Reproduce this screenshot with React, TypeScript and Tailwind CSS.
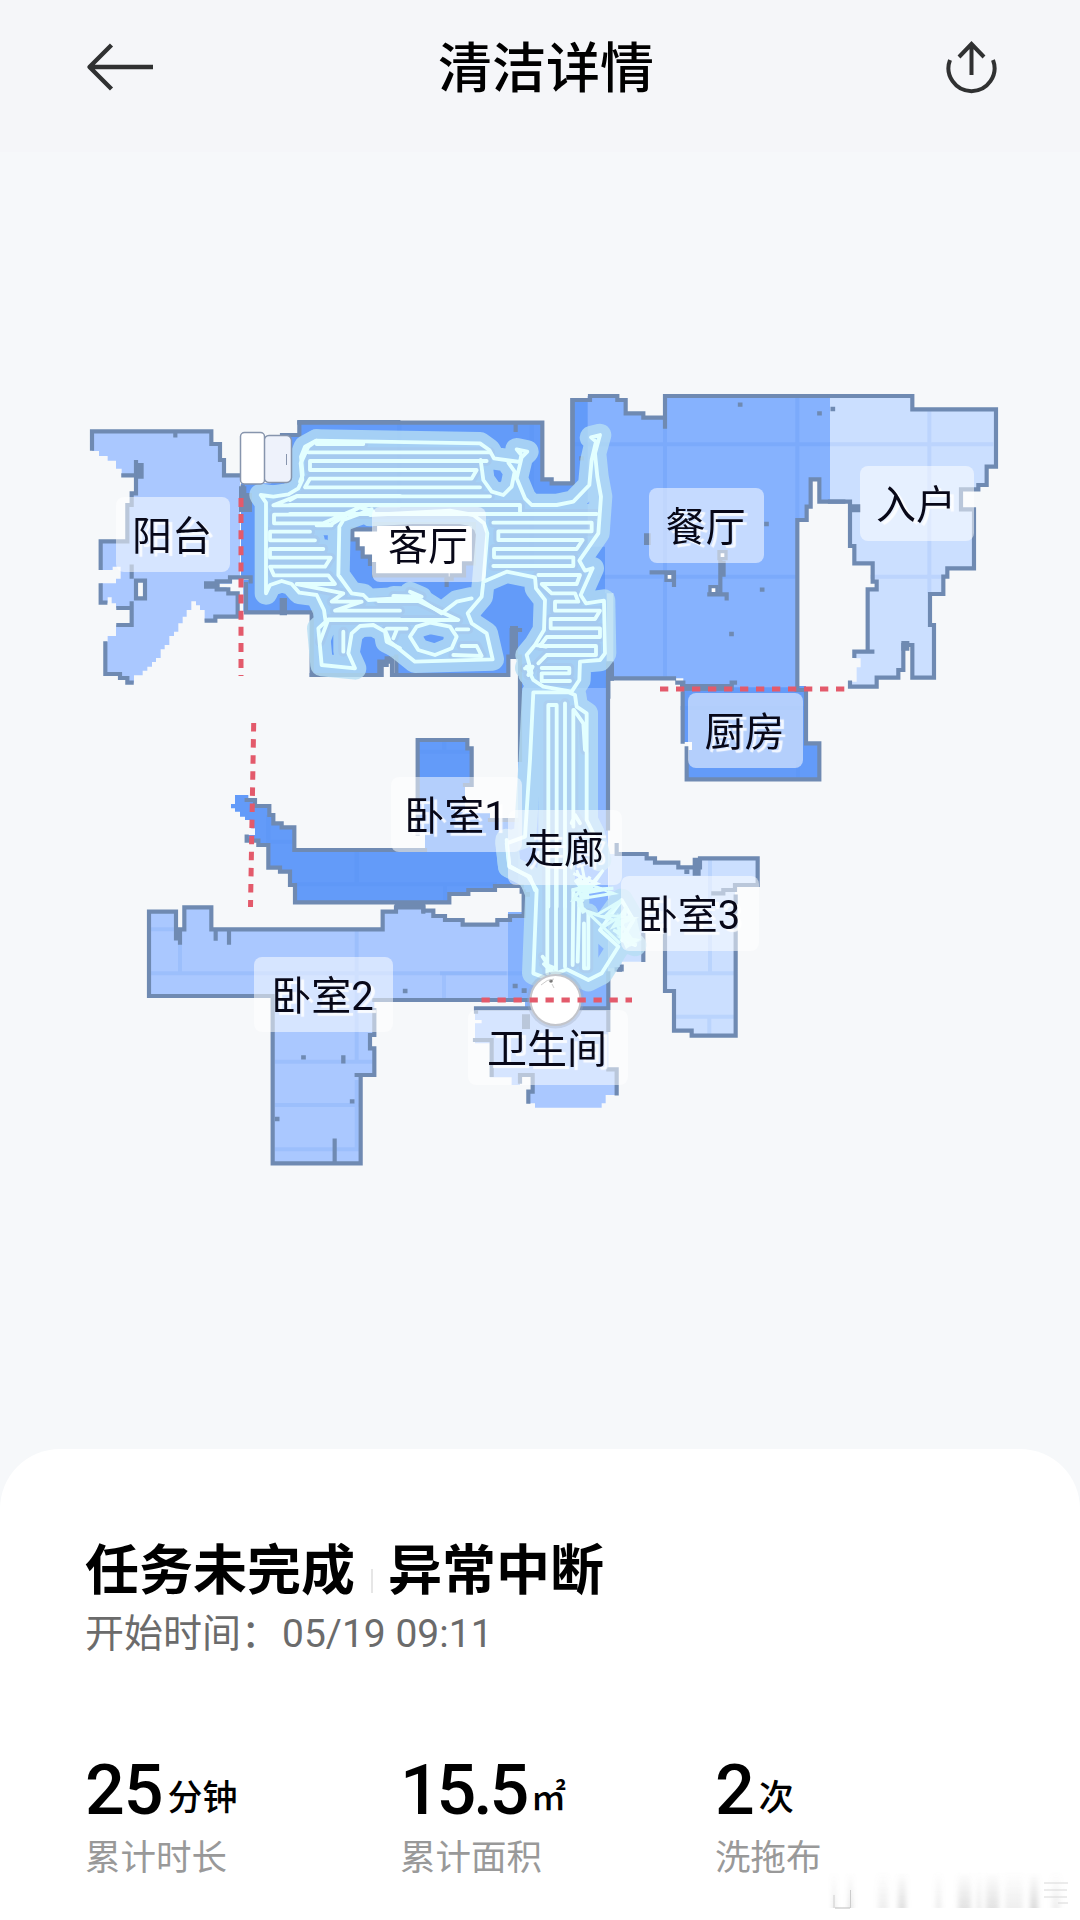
import type { ReactNode } from "react";

const WALL = "#6f8ab2";

/* Map tiles are drawn on a grid of one third of a pixel. */
function Tile({ x, y, children }: { x: number; y: number; children: ReactNode }) {
  return <g transform={`translate(${x} ${y}) scale(0.33333)`}>{children}</g>;
}

const tracks = [
  {
    x: 70,
    y: 380,
    outline:
      "M740 182 L715 200 L692 250 L697 300 L685 325 L655 343 L610 350 L572 345 L588 368 V640 L600 615 L635 603 L665 612 L688 638 L740 645 L762 690 L767 725 L745 745 L755 855 L855 865 L835 820 L845 760 L870 738 L910 735 L945 755 L950 785 L990 805",
    rows:
      "M990 376 H610 L680 348 H990 M740 436 H785 M800 404 H612 V430 H760 L870 382 L910 395 M720 455 H600 V481 H735 M760 507 H600 V533 H782 L765 560 H600 L612 586 H775 L795 612 H680 L820 640 L785 665 H875 L795 692 H990 M750 785 L775 718 H990 M820 755 V815",
  },
  {
    x: 290,
    y: 400,
    outline:
      "M30 245 L38 225 L33 170 L45 140 L78 122 L570 130 L598 150 L612 175 L690 186 L694 165 L680 148 L712 155 L695 172 L680 235 L705 295 L725 315 L800 315 L850 305 L898 255 L905 180 L918 125 L903 112 L930 105 L915 160 L922 230 L933 290 L925 400 L868 482 L885 512 L908 505 L872 585 L888 610 L942 602 L945 760 L930 780 L870 785 L868 840 L845 875 M572 180 L580 240 L605 275 L640 285 L665 260 L674 215 L655 188 M245 328 L160 360 L148 380 L145 525 L185 580 L220 585 L235 600 L380 592 L455 640 L500 605 L545 595 M240 345 L480 332 L550 345 L582 370 L592 400 L580 545 L650 515 L735 532 L738 565 L765 600 L762 690 L735 735 L710 765 L725 820 M580 545 L575 590 L533 640 L545 670 L590 700 L608 778 L375 785 L300 725 L285 690 M360 710 L380 680 L420 668 L480 680 L500 710 L485 745 L435 765 L385 750 Z M710 800 L730 840 L760 860 L845 875",
    rows:
      "M80 132 H220 M55 157 H600 M590 183 H60 V210 H560 L545 236 H60 L45 262 H570 M600 289 H20 L0 300 M0 315 H690 V338 M0 342 H920 M80 375 H120 L210 320 L240 335 M610 368 H905 V394 H625 V420 H878 L860 447 H612 V472 H850 V498 H610 M745 525 H870 L860 552 H755 L785 580 H855 L865 605 H795 V632 H930 L915 657 H782 V685 H930 V711 H770 L750 738 H918 V765 H770 L745 790 M755 804 H838 V820 H755 V843 H840 M310 588 L395 590 L360 575 M265 603 H385 L505 660 H120 M290 686 H350 M500 688 H535 M320 690 L310 715 M490 765 L575 768 L560 738 H515 M738 735 L768 740 M705 805 L728 800 L715 825",
  },
  {
    x: 480,
    y: 660,
    outline:
      "M265 97 H160 L150 300 L135 530 L80 550 L88 620 L150 650 L165 690 M265 97 L285 105 L290 140 L320 160 L320 480 L340 520 L360 600",
    rows:
      "M205 740 V135 H230 V740 M255 130 V740 M280 150 V500 M282 150 L310 190 L315 270 M275 490 L285 465 L300 490",
  },
  {
    x: 440,
    y: 840,
    outline:
      "M200 0 L208 78 L265 110 L290 150 L280 400 L320 415 L350 400 L380 388 L445 420 L485 400 L535 320 L480 270 L545 180 L580 240 L545 300 L585 315",
    rows:
      "M322 80 V400 M348 80 V400 M375 80 V380 M400 150 L398 375 M418 180 L413 365 M432 385 V250 M445 385 V220 M308 350 L340 400 L312 372 L345 385 M432 385 H445",
  },
];

const scribble =
  "M400 100 L470 130 L395 150 L520 145 L430 160 L490 90 L415 200 L450 110 L400 180 L520 160 L415 120 L430 220 L405 160 M430 210 L520 240 L470 225 L545 180 L500 225 L580 235 L520 260 L560 200 L540 290 L590 300 L560 320 L530 250 L575 225 M430 205 L540 310 M485 265 L530 235 L570 290 L520 270 L590 315 M410 90 L430 140 L405 120 L445 175 L425 75 L440 150 L465 120";

function Tracks({ kind, color, width }: { kind: "outline" | "rows"; color: string; width: number }) {
  return (
    <g fill="none" stroke={color} strokeWidth={width} strokeLinejoin="round" strokeLinecap="round">
      {tracks.map((t, i) => (
        <Tile key={i} x={t.x} y={t.y}>
          <path d={t[kind]} />
        </Tile>
      ))}
    </g>
  );
}

const labels = [
  { text: "阳台", x: 116, y: 497, w: 114 },
  { text: "客厅", x: 372, y: 507, w: 114 },
  { text: "餐厅", x: 649, y: 488, w: 115 },
  { text: "入户", x: 860, y: 466, w: 114 },
  { text: "卧室1", x: 391, y: 777, w: 131 },
  { text: "厨房", x: 688, y: 693, w: 115 },
  { text: "走廊", x: 508, y: 810, w: 114 },
  { text: "卧室3", x: 621, y: 876, w: 138 },
  { text: "卫生间", x: 468, y: 1010, w: 160 },
  { text: "卧室2", x: 254, y: 957, w: 139 },
];

function FloorMap() {
  return (
    <svg className="block h-[1297px] w-[1080px]" viewBox="0 152 1080 1297">
      {/* floors */}
      <Tile x={70} y={380}>
        <path
          fill="#aac8ff"
          d="M66 154 H424 V192 H450 V240 H462 V286 H510 V590 H545 V598 H485 V612 H445 V622 H470 V636 H500 V710 H436 V722 H404 V690 H390 V676 H378 V664 H364 V690 H350 V710 H338 V730 H325 V755 H312 V768 H298 V795 H284 V808 H272 V834 H258 V846 H246 V860 H232 V872 H218 V886 H192 V908 H170 V894 H150 V882 H106 V785 H113 V768 H138 V735 H185 V684 H138 V670 H125 V652 H113 V668 H92 V610 H138 V596 H152 V560 H128 V570 H92 V484 H172 V375 H185 V340 H198 V286 H155 V266 H138 V242 H113 V228 H87 V213 H66 Z"
        />
        <path
          fill="#639bf9"
          d="M513 310 H690 V695 H520 V600 H545 V590 H513 Z M630 165 H760 V330 H600 Z"
        />
      </Tile>
      <Tile x={290} y={400}>
        <path
          fill="#639bf9"
          d="M28 68 H757 V238 H785 V250 H848 V-2 H950 V870 H690 V770 H655 V825 H315 V775 H288 V800 H275 V825 H65 V637 H0 V106 H28 Z"
        />
      </Tile>
      <path fill="#86b2fe" d="M520 688 H608 V1008 H525 V999 H508 V912 H524 V888 H518 V688 Z" />
      <Tile x={220} y={700}>
        <path
          fill="#639bf9"
          d="M45 285 H85 V305 H110 V318 H148 V345 H160 V370 H185 V382 H223 V450 H615 V400 H593 V120 H747 V145 H755 V258 H735 V340 H810 V360 H895 V555 H825 V570 H745 V582 H688 V607 H225 V555 H210 V515 H180 V503 H145 V435 H115 V422 H75 V405 H105 V385 H93 V360 H75 V350 H60 V335 H45 V325 H33 V312 H45 Z"
        />
      </Tile>
      <Tile x={130} y={880}>
        <path
          fill="#aac8ff"
          d="M57 95 H138 V148 H163 V82 H244 V148 H758 V95 H798 V82 H880 V92 H910 V108 H945 V120 H1000 V135 H1100 V120 H1134 V358 H733 V465 H720 V505 H733 V585 H692 V850 H428 V348 H57 Z"
        />
      </Tile>
      <Tile x={440} y={840}>
        <path
          fill="#cbdfff"
          d="M505 42 H620 V55 H650 V70 H715 V82 H780 V55 H955 V140 H885 V587 H755 V572 H702 V455 H675 V250 H612 V365 H545 V385 H505 Z"
        />
        <path
          fill="#aac8ff"
          d="M105 505 H505 V685 H530 V765 H497 V790 H485 V803 H285 V790 H265 V755 H278 V705 H240 V735 H215 V712 H150 V685 H160 V610 H105 V550 H125 V540 H105 Z"
        />
      </Tile>
      <path fill="#639bf9" d="M682 686 H806 V743 H819 V779 H687 V750 H692 V742 H682 Z" />
      <Tile x={560} y={380}>
        <path
          fill="#86b2fe"
          d="M83 48 H175 V60 H197 V100 H250 V113 H315 V48 H810 V365 H780 V298 H752 V380 H740 V420 H712 V922 H370 V895 H160 V640 H135 V500 H83 Z"
        />
      </Tile>
      <Tile x={780} y={380}>
        <path
          fill="#cbdfff"
          d="M150 48 H397 V88 H648 V260 H620 V315 H595 V328 H545 V388 H582 V565 H502 V590 H490 V642 H450 V735 H462 V893 H397 V795 H370 V870 H355 V893 H290 V920 H210 V905 H230 V862 H242 V835 H223 V815 H263 V628 H290 V600 H278 V550 H223 V498 H210 V365 H150 Z"
        />
      </Tile>

      {/* floor seams */}
      <g stroke="#4f8bee" strokeOpacity={0.2} strokeWidth={12} fill="none">
        <Tile x={560} y={380}>
          <path d="M40 193 H810 M110 590 H712 M315 113 V890 M712 48 V420" />
          <path d="M810 193 H1300 M1108 90 V640 M930 590 H1150" strokeOpacity={0.12} />
        </Tile>
        <Tile x={290} y={400}>
          <path d="M328 70 V345 M725 70 V540" />
        </Tile>
        <Tile x={220} y={700}>
          <path d="M410 450 V555 M225 553 H830 M673 125 V155 M600 155 H750 M140 425 H220 M145 345 V430 M675 555 V600" />
        </Tile>
        <Tile x={130} y={880}>
          <path
            d="M60 148 H150 M60 280 H1130 M150 150 V280 M680 150 V540 M435 545 H730 M435 675 H690 M435 808 H690 M680 600 V808"
            strokeOpacity={0.15}
          />
        </Tile>
        <Tile x={440} y={840}>
          <path d="M810 60 V400 M680 400 H885 M705 530 H885 M808 530 V585 M0 400 H250 M12 400 V475" strokeOpacity={0.13} />
        </Tile>
        <path d="M680 708 H806 M798 760 V778" strokeWidth={4} />
      </g>

      {/* walls */}
      <g stroke={WALL} strokeWidth={12.5} fill="none" strokeLinecap="square">
        <Tile x={70} y={380}>
          <path d="M66 206 V154 H424 V192 H450 V240 H462 V286 H508 M316 155 V166 M198 246 V286 H160 M198 286 V340 H185 V375 H172 V484 H92 V564 M92 616 V668 H106 M185 560 V590 M185 670 V735 H145 M185 684 H145 M106 790 V882 H150 V894 H172 V908 H185 M410 722 H436 V710 H503 V640 H475 V628 H440 V604 H480 V592 H542 V604 M528 612 V697 H725 V885 H928 V845 H955 M979 830 V885 M636 165 H688 V126 H985 M518 320 V390" />
          <path d="M198 602 H225 V655 H198 Z" fill="#f7f9fb" />
          <path d="M210 260 V285 M413 615 H438 M640 665 V695 M518 330 V385 H535 V350" strokeWidth={22} />
        </Tile>
        <Tile x={290} y={400}>
          <path d="M28 68 H757 V238 H785 V250 H848 V0 M677 75 V90 M65 825 H275 V795 H290 V775 H306 V825 H655 V770 H665 V690 H690 M690 770 V1080 M955 790 V890 M470 540 V555" />
          <path
            d="M187 388 H255 V372 H552 V490 H522 V526 H485 V536 H470 V526 H252 V492 H240 V470 H218 V445 H203 V418 H187 Z"
            fill="#fff"
          />
          <path d="M672 690 V765 M960 800 V830" strokeWidth={24} />
        </Tile>
        <Tile x={560} y={380}>
          <path d="M37 305 V60 H90 V48 H172 V60 H197 V100 H250 V113 H315 V140 M315 113 V48 H965 M712 930 V420 H740 V380 H752 V298 H778 V365 H850 M155 850 V895 H342 M144 895 V1345 M275 577 H342 V615 M481 520 V640 M448 643 H500 V655 M352 908 H370 V925 H515 V908 H525" />
          <path d="M262 470 V485 M487 552 V580 M370 922 H510" strokeWidth={20} />
          <path
            d="M540 74h1 M818 87h1 M778 100h1 M619 432h1 M606 629h1 M514 762h1 M64 235h1"
            strokeWidth={13}
          />
          <path
            d="M477 515 h21 v21 h-21 z M450 620 h21 v21 h-21 z M318 580 h21 v21 h-21 z"
            fill="#fff"
            strokeWidth={10}
          />
        </Tile>
        <Tile x={780} y={380}>
          <path d="M150 48 H397 V88 H648 V260 H620 V315 H595 V328 H543 V388 H582 V565 H502 V590 H490 V642 H450 V735 H462 V893 H397 V795 H370 V870 H355 V893 H290 V920 H210 V908 M223 828 V815 H277 M263 815 V628 H290 V605 H278 V550 H223 V498 H210 V365 H150" />
          <path d="M225 385 H230 M376 795 V800" strokeWidth={24} />
          <path d="M50 930 H78 V1090 H118 V1198 H-280 V1105 M-292 1085 V940" />
        </Tile>
        <Tile x={220} y={700}>
          <path d="M80 300 H105 V318 H148 V345 H160 V370 H185 V382 H223 V450 H615 M593 400 V120 H742 V145 H755 V255 H735 M810 360 H890 M225 607 H688 V582 H745 V570 H825 V558 H905 V575 H911 V648 H870 V660 H832 V674 H728 V660 H675 V648 H640 V632 H610 V618 H530 M225 607 V555 H210 V515 H180 V503 H145 V435 H115 V422 H80 V410" />
        </Tile>
        <Tile x={130} y={880}>
          <path d="M57 348 V95 H138 V175 M150 188 V148 H163 V82 H244 V148 H758 V95 H798 V82 H880 V95 M257 150 V176 M297 150 V188 M57 348 H428 V850 H692 V585 H733 V505 H720 V465 H733 V390 M733 360 H1190 M680 585 H692 M614 782 V850" />
          <path d="M520 532h1 M666 664h1 M441 717h1 M825 333h1 M640 532v12" strokeWidth={13} />
        </Tile>
        <Tile x={440} y={840}>
          <path d="M530 15 V42 H620 V55 H645 V68 H715 V82 H780 V55 H953 V135 H885 V150 H850 V160 H820 M675 270 V453 H702 V572 H755 V587 H887 V170 M610 285 V360 M545 380 V388 H530 M505 400 V505 H108 V515 M505 505 V570 M105 600 H155 V705 M240 725 V705 H278 V755 H265 V785 M505 688 H530 V760" />
          <path d="M770 65 V95 M258 535 V555" strokeWidth={24} />
          <path d="M225 438h1 M252 452h1 M262 163h1 M740 95h1 M538 388h1" strokeWidth={14} />
        </Tile>
      </g>

      {/* swept area and the route inside it */}
      <g opacity={0.8}>
        <Tracks kind="outline" color="#b6def4" width={68} />
        <Tracks kind="rows" color="#b6def4" width={60} />
        <Tracks kind="rows" color="#b6d6ed" width={30} />
      </g>
      <Tracks kind="outline" color="#e3ffff" width={11.5} />
      <Tracks kind="rows" color="#e3ffff" width={11.5} />
      <Tile x={440} y={840}>
        <path d={scribble} fill="none" stroke="#dcfcfd" strokeWidth={9} />
        <path
          d="M530 220 L590 235 L605 300 L570 320 L530 290 Z"
          fill="#dcfcfd"
          fillOpacity={0.6}
        />
      </Tile>

      {/* dock */}
      <rect x={264} y={435.5} width={27.5} height={47} rx={5} fill="#eef2fb" stroke="#8795ad" strokeWidth={1.5} />
      <rect x={240.5} y={432.5} width={24} height={51.5} rx={4} fill="#fff" stroke="#8795ad" strokeWidth={1.5} />
      <path d="M286.5 454 V465" stroke="#8795ad" strokeWidth={1} />

      {/* room labels */}
      {labels.map((l) => (
        <g key={l.text}>
          <rect x={l.x} y={l.y} width={l.w} height={75} rx={8} fill="#fff" fillOpacity={0.52} />
          <text
            x={l.x + l.w / 2 - 1}
            y={l.y + 52.5}
            textAnchor="middle"
            className="fill-[#080818] font-['Roboto','Noto_Sans_CJK_SC',sans-serif] text-[40px] font-normal [text-shadow:4px_3px_1px_rgba(255,255,255,0.85)]"
          >
            {l.text}
          </text>
        </g>
      ))}

      {/* robot */}
      <circle cx={555.5} cy={1000} r={28.5} fill="#9fa9bd" fillOpacity={0.35} />
      <circle cx={555.5} cy={1000} r={25} fill="#fff" stroke="#c3c5cb" strokeWidth={2} />
      <circle cx={551} cy={981} r={1.8} fill="#777" />
      <path d="M552 984 l2 4 M541 985 q6 -6 13 -6" stroke="#ccc" strokeWidth={1} fill="none" />

      {/* virtual walls */}
      <g stroke="#e35a6b" strokeWidth={5} fill="none">
        <path d="M241 498 V676" strokeDasharray="9 7.1" />
        <path d="M253.7 723 L250.5 907" strokeDasharray="8.5 7.6" />
        <path d="M660 689 H845" strokeDasharray="8.3 7.7" />
        <path d="M481.5 1000 H632" strokeDasharray="8.3 7.7" />
      </g>
    </svg>
  );
}

const stats = [
  { value: "25", unit: "分钟", label: "累计时长", tracking: "tracking-[-1px]" },
  { value: "15.5", unit: "㎡", label: "累计面积", tracking: "tracking-[-3.2px]" },
  { value: "2", unit: "次", label: "洗拖布", tracking: "tracking-[-1px]" },
];

export default function App() {
  return (
    <div className="flex h-[1920px] w-[1080px] flex-col overflow-hidden bg-[#f6f8fa] font-['Roboto','Noto_Sans_CJK_SC',sans-serif] text-black">
      <header className="flex h-[152px] shrink-0 items-start justify-between bg-[#f5f6f9] pl-[84px] pr-[81px] pt-[36px]">
        <svg className="h-[62px] w-[72px]" viewBox="84 36 72 62" fill="none" stroke="#303132" strokeWidth={4.4}>
          <path d="M111.5 45 L89.5 67 L111.5 89 M89 67 H153" strokeLinejoin="round" />
        </svg>
        <h1 className="ml-[-7px] mt-[3px] text-[54px] font-medium leading-[62px]">清洁详情</h1>
        <svg className="h-[62px] w-[56px]" viewBox="943 36 56 62" fill="none" stroke="#303132" strokeWidth={4}>
          <path d="M950 60 A23 23 0 1 0 993 60 M971.5 44 V75 M959 57 L971.5 44 L984 57" />
        </svg>
      </header>

      <FloorMap />

      <section className="relative flex grow flex-col rounded-t-[60px] bg-white pl-[85px] pt-[88px]">
        <div className="flex h-[70px] items-center">
          <h2 className="text-[54px] font-bold leading-[70px]">任务未完成</h2>
          <span className="ml-[16px] mt-[18px] h-[24px] w-[2px] bg-[#e6e6e6]" />
          <h2 className="ml-[15px] text-[54px] font-bold leading-[70px]">异常中断</h2>
        </div>
        <p className="mt-[2px] text-[39px] leading-[50px] text-[#6b6b6b]">
          开始时间：<span className="ml-[2px]">05/19 09:11</span>
        </p>
        <div className="mt-[91px] grid w-[945px] grid-cols-3">
          {stats.map((s) => (
            <div key={s.label} className="flex flex-col">
              <div className="flex h-[80px] items-baseline leading-[80px]">
                <span className={`text-[70px] font-medium ${s.tracking}`}>{s.value}</span>
                <span className="relative top-[-4px] ml-[5px] text-[35px] font-medium">{s.unit}</span>
              </div>
              <span className="mt-[5px] text-[35.5px] leading-[46px] text-[#999999]">{s.label}</span>
            </div>
          ))}
        </div>
        <svg className="absolute bottom-[8px] right-[6px] h-[42px] w-[246px]" viewBox="828 1870 246 42">
          <defs>
            <linearGradient id="fade" x1="0" y1="0" x2="0" y2="1">
              <stop offset="0" stopColor="#999" stopOpacity="0" />
              <stop offset="1" stopColor="#999" stopOpacity="0.4" />
            </linearGradient>
            <filter id="soft">
              <feGaussianBlur stdDeviation="2.4 0.5" />
            </filter>
          </defs>
          <g fill="url(#fade)" filter="url(#soft)">
            <rect x={833} y={1872} width={2} height={36} />
            <rect x={849} y={1872} width={3} height={36} />
            <rect x={878} y={1872} width={10} height={36} opacity={0.4} />
            <rect x={898} y={1872} width={8} height={36} opacity={0.8} />
            <rect x={936} y={1872} width={5} height={36} opacity={0.5} />
            <rect x={958} y={1872} width={13} height={36} opacity={0.7} />
            <rect x={977} y={1872} width={4} height={36} opacity={0.6} />
            <rect x={986} y={1872} width={13} height={36} opacity={0.7} />
            <rect x={1005} y={1872} width={18} height={36} opacity={0.4} />
            <rect x={1030} y={1872} width={8} height={36} opacity={0.9} />
            <rect x={1052} y={1872} width={8} height={36} opacity={0.4} />
          </g>
          <path d="M834 1895 V1908 M850.5 1890 V1908" stroke="#ccc" strokeWidth={1} />
          <path d="M835 1908 H850" stroke="#bbb" strokeWidth={1} />
          <path d="M1044 1883 H1068 M1044 1890 H1067 M1044 1897 H1067 M1058 1903 H1068" stroke="#d8d8d8" strokeWidth={1} />
        </svg>
      </section>
    </div>
  );
}
